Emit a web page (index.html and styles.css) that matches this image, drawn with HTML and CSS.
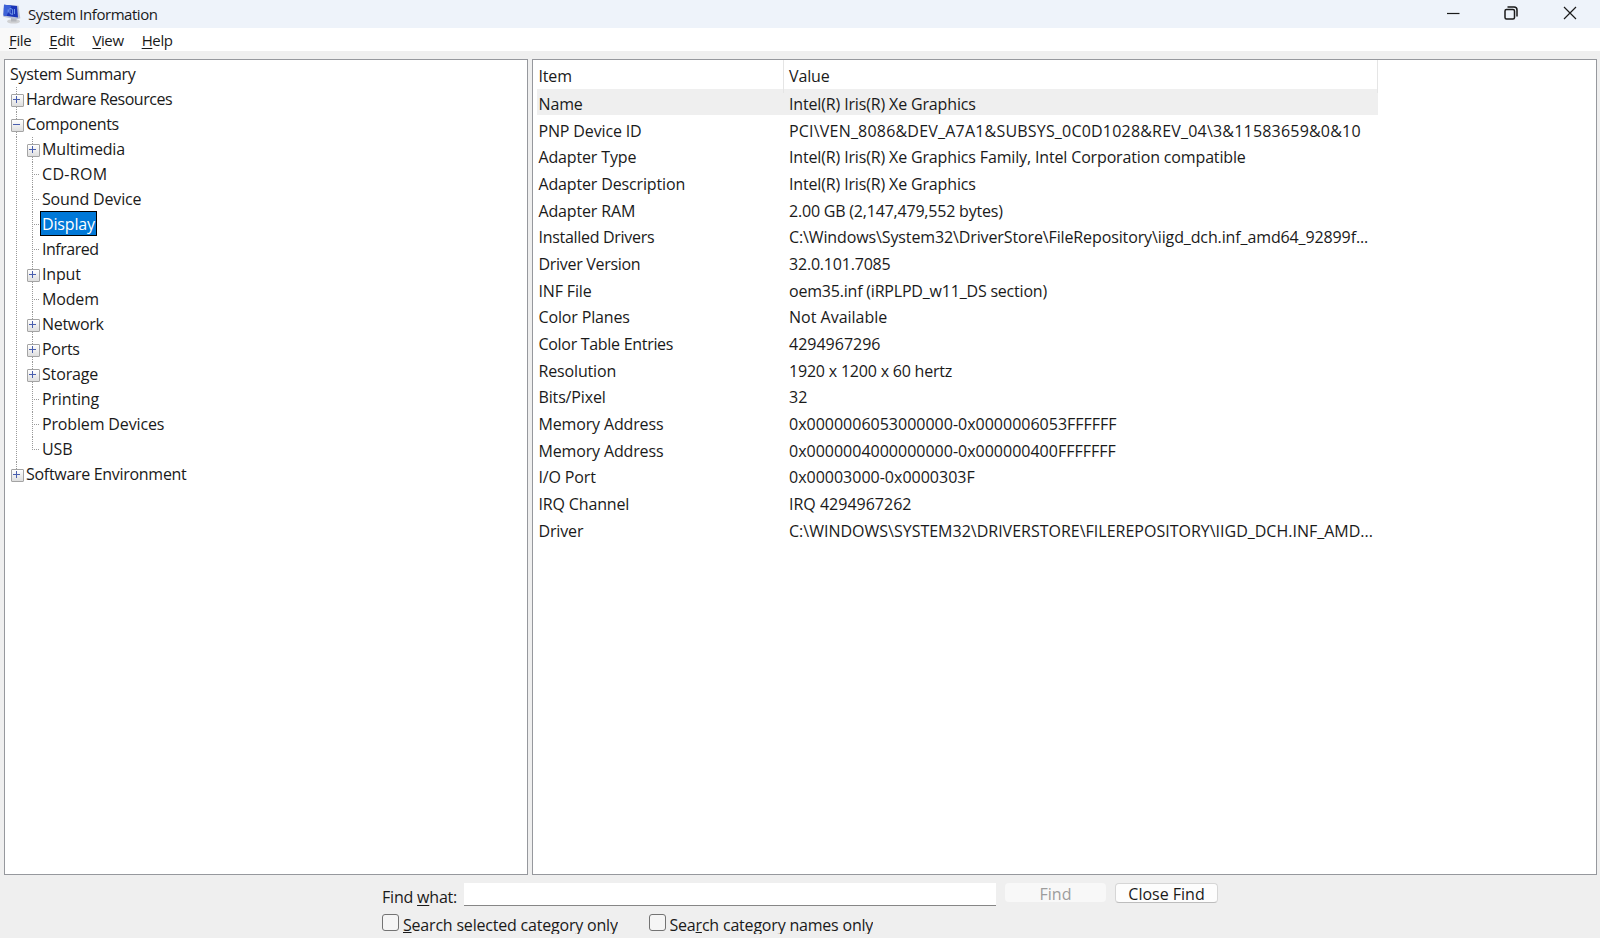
FILE: index.html
```
<!DOCTYPE html>
<html lang="en">
<head>
  <meta charset="UTF-8">
  <meta name="viewport" content="width=device-width, initial-scale=1.0">
  <title>System Information</title>
  <link rel="stylesheet" href="styles.css">
</head>
<body>
  <div class="window">

    <!-- Title bar -->
    <header class="titlebar">
      <svg class="app-icon" width="18" height="20" viewBox="0 0 18 20">
        <ellipse cx="10.500" cy="17.400" rx="6.500" ry="2.200" fill="#cfd0d2"/>
        <path d="M8 13l5.500 1v3.500H8z" fill="#b4b6bb"/>
        <path d="M1 .8L15.500 1.800 17.300 14.200 13 15.500.3 12.800z" fill="#b9c0d4"/>
        <path d="M1 .8L14 2 15 13.600.6 11.600z" fill="#1b35b8"/>
        <path d="M1 .8L8.500 1.500 3.500 12 .6 11.600z" fill="#3c62d8"/>
        <path d="M7 4.200l2.600 1.300v5L7 9.500zM5.200 5.500v3M11.500 5v5" fill="none" stroke="#7aa0ee" stroke-width=".9"/>
      </svg>
      <h1>System Information</h1>
      <div class="controls">
        <svg width="14" height="14" viewBox="0 0 14 14"><path d="M1 7.500h12.500"/></svg>
        <svg class="restore" width="14" height="14" viewBox="0 0 14 14"><rect x="1" y="3.500" width="9.500" height="9.500" rx="1.500"/><path d="M3.500 1h6.500a3 3 0 0 1 3 3v6.500"/></svg>
        <svg width="14" height="14" viewBox="0 0 14 14"><path d="M1 1l12 12M13 1L1 13"/></svg>
      </div>
    </header>

    <!-- Menu -->
    <nav class="menu">
      <span class="active"><u>F</u>ile</span>
      <span><u>E</u>dit</span>
      <span><u>V</u>iew</span>
      <span><u>H</u>elp</span>
    </nav>

    <main class="panes">
      <!-- Category tree -->
      <div class="tree">
        <div class="node root"><span class="tight">System Summary</span></div>
        <ul>
          <li class="node plus"><span class="tighter">Hardware Resources</span></li>
          <li class="node minus"><span class="tight">Components</span></li>
          <li class="branch">
            <ul>
              <li class="node plus"><span>Multimedia</span></li>
              <li class="node"><span class="wide">CD-ROM</span></li>
              <li class="node"><span>Sound Device</span></li>
              <li class="node"><span class="selected">Display</span></li>
              <li class="node"><span class="tighter">Infrared</span></li>
              <li class="node plus"><span>Input</span></li>
              <li class="node"><span>Modem</span></li>
              <li class="node plus"><span class="tight">Network</span></li>
              <li class="node plus"><span class="tight">Ports</span></li>
              <li class="node plus"><span>Storage</span></li>
              <li class="node"><span>Printing</span></li>
              <li class="node"><span>Problem Devices</span></li>
              <li class="node last"><span>USB</span></li>
            </ul>
          </li>
          <li class="node plus last"><span class="tight">Software Environment</span></li>
        </ul>
      </div>

      <!-- Details -->
      <div class="details">
        <div class="row head"><div>Item</div><div>Value</div></div>
        <div class="row current"><div>Name</div><div>Intel(R) Iris(R) Xe Graphics</div></div>
        <div class="row"><div>PNP Device ID</div><div class="id">PCI\VEN_8086&amp;DEV_A7A1&amp;SUBSYS_0C0D1028&amp;REV_04\3&amp;11583659&amp;0&amp;10</div></div>
        <div class="row"><div>Adapter Type</div><div>Intel(R) Iris(R) Xe Graphics Family, Intel Corporation compatible</div></div>
        <div class="row"><div>Adapter Description</div><div>Intel(R) Iris(R) Xe Graphics</div></div>
        <div class="row"><div>Adapter RAM</div><div class="num">2.00 GB (2,147,479,552 bytes)</div></div>
        <div class="row"><div class="tight">Installed Drivers</div><div class="path">C:\Windows\System32\DriverStore\FileRepository\iigd_dch.inf_amd64_92899f...</div></div>
        <div class="row"><div class="tight">Driver Version</div><div class="num">32.0.101.7085</div></div>
        <div class="row"><div>INF File</div><div class="num">oem35.inf (iRPLPD_w11_DS section)</div></div>
        <div class="row"><div>Color Planes</div><div class="hex">Not Available</div></div>
        <div class="row"><div class="tight">Color Table Entries</div><div class="hex">4294967296</div></div>
        <div class="row"><div>Resolution</div><div class="num">1920 x 1200 x 60 hertz</div></div>
        <div class="row"><div>Bits/Pixel</div><div class="hex">32</div></div>
        <div class="row"><div>Memory Address</div><div class="hex">0x0000006053000000-0x0000006053FFFFFF</div></div>
        <div class="row"><div>Memory Address</div><div class="hex">0x0000004000000000-0x000000400FFFFFFF</div></div>
        <div class="row"><div>I/O Port</div><div class="hex">0x00003000-0x0000303F</div></div>
        <div class="row"><div>IRQ Channel</div><div class="hex">IRQ 4294967262</div></div>
        <div class="row"><div>Driver</div><div class="hex">C:\WINDOWS\SYSTEM32\DRIVERSTORE\FILEREPOSITORY\IIGD_DCH.INF_AMD...</div></div>
      </div>
    </main>

    <!-- Find bar -->
    <footer class="find">
      <div class="find-line">
        <label for="what">Find <u>w</u>hat:</label>
        <input type="text" id="what">
        <button class="btn" disabled>Find</button>
        <button class="btn close">Close Find</button>
      </div>
      <div class="find-options">
        <label class="check first"><input type="checkbox"><span><u>S</u>earch selected category only</span></label>
        <label class="check"><input type="checkbox"><span>Sea<u>r</u>ch category names only</span></label>
      </div>
    </footer>

  </div>
</body>
</html>
```

FILE: styles.css
```
* {
  margin: 0;
  padding: 0;
  box-sizing: border-box;
}

body {
  font-family: "Open Sans", "Noto Sans", sans-serif;
  font-size: 16px;
  color: #1a1a1a;
  background: #efefef;
  overflow: hidden;
}

.window {
  width: 1600px;
  height: 938px;
  display: flex;
  flex-direction: column;
}

u {
  text-decoration-thickness: 1px;
  text-underline-offset: 2px;
}

/* title bar */
.titlebar {
  display: flex;
  align-items: center;
  height: 28px;
  padding-left: 3px;
  background: #eef3fa;
}

.app-icon {
  margin-top: -1px;
}

h1 {
  margin-left: 7px;
  font-size: 15px;
  font-weight: 400;
  line-height: 28px;
  letter-spacing: -0.45px;
}

.controls {
  display: flex;
  gap: 44px;
  margin: -2px 23px 0 auto;
}

.controls svg {
  fill: none;
  stroke: #1a1a1a;
  stroke-width: 1.2;
}

.controls .restore {
  margin-right: 1px;
  stroke-width: 1.5;
}

/* menu */
.menu {
  display: flex;
  height: 23px;
  background: #fff;
  font-size: 15px;
  line-height: 25px;
  letter-spacing: -0.38px;
}

.menu span {
  padding: 0 9px;
}

.menu .active {
  background: #f9f9f9;
}

/* panes */
.panes {
  display: flex;
  gap: 4px;
  height: 816px;
  margin: 8px 3px 0 4px;
}

.tree,
.details {
  background: #fff;
  border: 1px solid #96989d;
}

.tree {
  width: 524px;
  padding: 2px 0 0 5px;
  letter-spacing: -0.15px;
}

.details {
  flex: 1;
  padding-left: 4px;
  letter-spacing: -0.15px;
}

.tight {
  letter-spacing: -0.3px;
}

.tighter {
  letter-spacing: -0.48px;
}

.wide {
  letter-spacing: 0.3px;
}

ul {
  list-style: none;
}

.node {
  position: relative;
  height: 25px;
  line-height: 25px;
  padding-left: 16px;
}

.root {
  padding-left: 0;
}

.branch {
  padding-left: 16px;
  background: repeating-linear-gradient(#9a9a9a 0 1px, transparent 1px 2px) 6px 0 / 1px 100% no-repeat;
}

/* dotted connector lines */
li.node {
  background:
    repeating-linear-gradient(#9a9a9a 0 1px, transparent 1px 2px) 6px 0 / 1px 100% no-repeat,
    repeating-linear-gradient(90deg, #9a9a9a 0 1px, transparent 1px 2px) 6px 12px / 8px 1px no-repeat;
}

li.node.last {
  background-size: 1px 12px, 8px 1px;
}

/* expander boxes */
.plus::before,
.minus::before {
  content: "";
  position: absolute;
  left: 1px;
  top: 7px;
  width: 11px;
  height: 11px;
  border: 1px solid #a4a4a4;
  border-radius: 1px;
  background:
    linear-gradient(#4a5fae, #4a5fae) 1px 4px / 7px 1px no-repeat,
    linear-gradient(#fff, #dedede);
}

.plus::before {
  background:
    linear-gradient(#4a5fae, #4a5fae) 1px 4px / 7px 1px no-repeat,
    linear-gradient(#4a5fae, #4a5fae) 4px 1px / 1px 7px no-repeat,
    linear-gradient(#fff, #dedede);
}

.node .selected {
  display: inline-block;
  height: 25px;
  margin: -1px 0 0 -2px;
  padding: 0 1px;
  border: 1px solid #000;
  line-height: 24px;
  vertical-align: top;
  color: #fff;
  background: #0078d7;
}

/* item / value table */
.row {
  display: grid;
  grid-template-columns: 247px 594px;
  width: 841px;
  height: 26.68px;
  line-height: 30px;
  white-space: nowrap;
}

.row div {
  padding-left: 1.5px;
}

.row div + div {
  padding-left: 5px;
}

.head {
  height: 29px;
  line-height: 33px;
}

.head div {
  border-right: 1px solid #e5e5e5;
}

.current {
  background: linear-gradient(#efefef, #efefef) 0 0 / 100% 26px no-repeat;
}

.num {
  letter-spacing: -0.2px;
}

.id {
  letter-spacing: 0.2px;
}

.path {
  letter-spacing: -0.12px;
}

.hex {
  letter-spacing: 0;
}

/* find bar */
.find {
  padding: 8px 0 0 382px;
  letter-spacing: -0.2px;
}

.find-line {
  display: flex;
  height: 24px;
}

.find-line label {
  width: 82px;
  line-height: 28px;
}

.find-line input {
  width: 532px;
  height: 23px;
  border: 0;
  border-bottom: 1px solid #868686;
  background: #fff;
}

.btn {
  width: 101px;
  height: 19px;
  margin-left: 9px;
  border: 0;
  border-radius: 4px;
  background: #f8f8f8;
  font: inherit;
  line-height: 23px;
  color: #9d9d9d;
}

.btn.close {
  width: 103px;
  height: 20px;
  border: 1px solid #d6d6d6;
  border-bottom-color: #bdbdbd;
  background: #fdfdfd;
  line-height: 21px;
  color: #1a1a1a;
}

.find-options {
  display: flex;
  height: 26px;
  padding-top: 7px;
}

.check {
  display: flex;
}

.check.first {
  width: 266.5px;
}

.check input {
  appearance: none;
  width: 17px;
  height: 17px;
  margin-right: 4px;
  border: 1px solid #737373;
  border-radius: 3px;
  background: #f5f5f5;
}

/* the labels are one pixel row short of their descenders */
.check span {
  height: 20px;
  line-height: 22px;
  overflow: hidden;
}

.check u {
  text-underline-offset: 1px;
}
```
